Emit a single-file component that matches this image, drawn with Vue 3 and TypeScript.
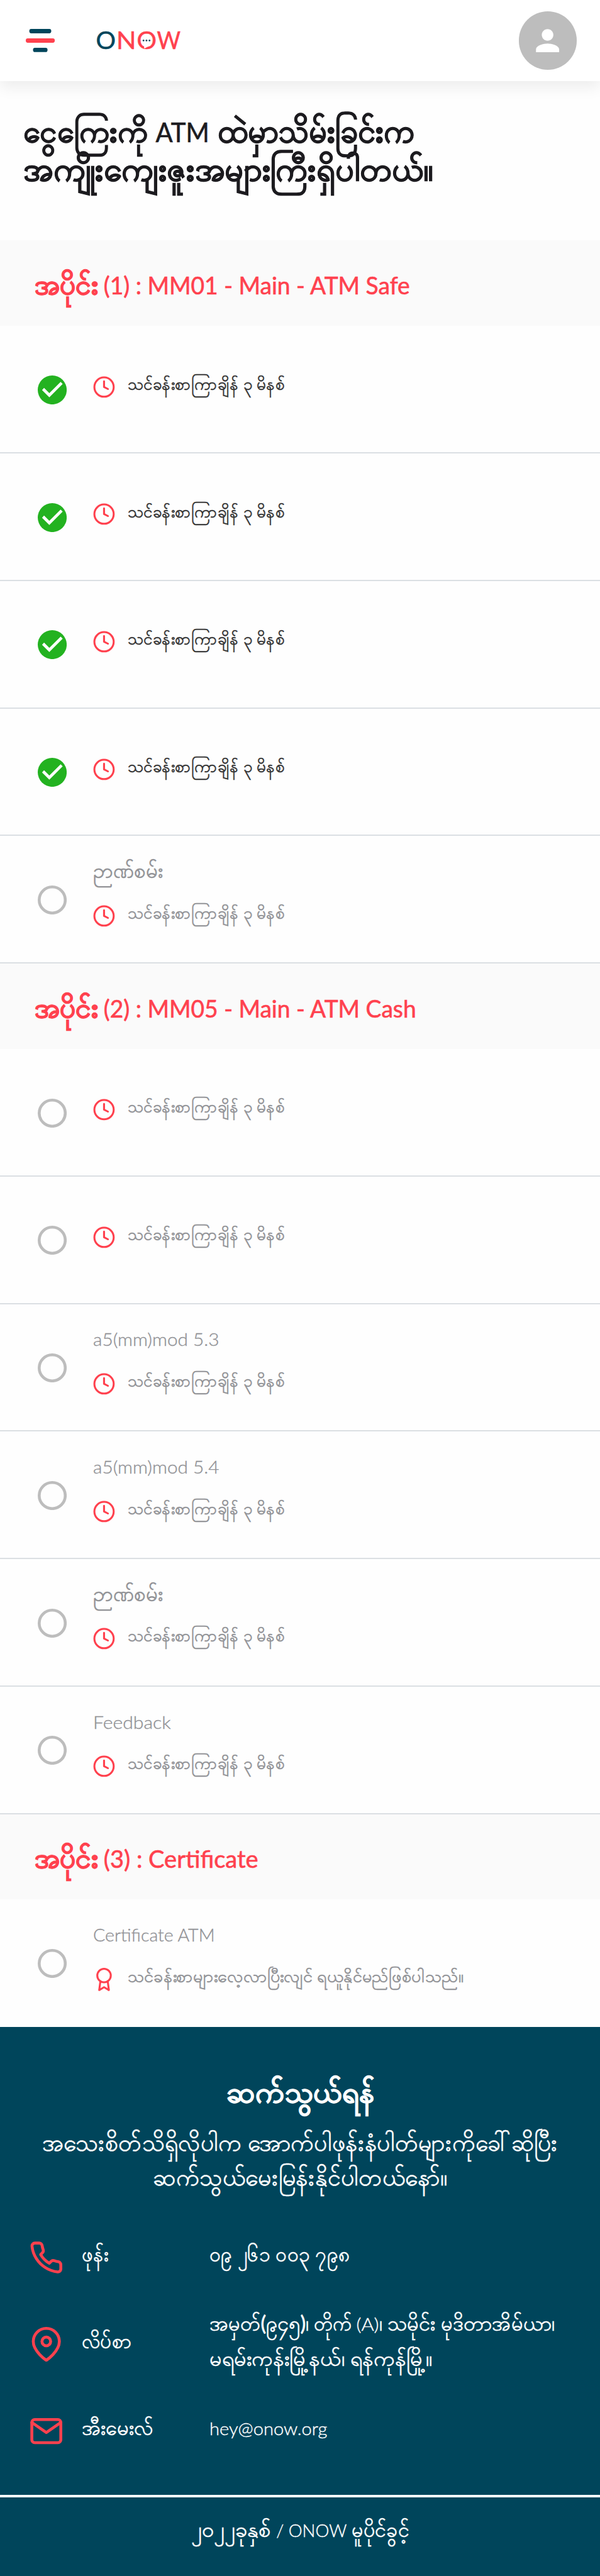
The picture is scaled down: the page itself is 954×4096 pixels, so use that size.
<script setup lang="ts">
import { h, type FunctionalComponent } from 'vue'

interface Run {
  text: string
  x?: number
  width: number
  size: number
  weight?: number
}

interface Lesson {
  title?: Run
  done?: boolean
  award?: boolean
}

interface Section {
  heading: Run[]
  lessons: Lesson[]
}

const outline = (run: Run): number => {
  const burmese = /[\u1000-\u109f]/.test(run.text)
  if (!burmese) return run.weight === 300 ? 0.5 : 0.8
  return run.weight === 700 ? 1.2 : 0.8
}

/** One line of mixed Burmese and Latin runs sharing a baseline. Units are tenths of a rem. */
const TextLine: FunctionalComponent<{ runs: Run[]; height: number; base: number }> = (props) => {
  const last = props.runs[props.runs.length - 1]
  const width = (last.x ?? 0) + last.width
  return h(
    'svg',
    { viewBox: `0 0 ${width} ${props.height}`, width: `${width / 10}rem`, height: `${props.height / 10}rem` },
    props.runs.map((run) =>
      h(
        'text',
        {
          x: run.x ?? 0,
          y: props.base,
          'font-size': run.size,
          'font-weight': run.weight ?? 400,
          stroke: 'currentColor',
          'stroke-width': outline(run),
          textLength: run.width,
          lengthAdjust: 'spacingAndGlyphs',
        },
        run.text,
      ),
    ),
  )
}
TextLine.props = ['runs', 'height', 'base']

const titleLines: Run[][] = [
  [
    { text: 'ငွေကြေးကို', x: 0, width: 258, size: 64, weight: 700 },
    { text: 'ATM', x: 274, width: 111, size: 55 },
    { text: 'ထဲမှာသိမ်းခြင်းက', x: 403, width: 407, size: 65, weight: 700 },
  ],
  [{ text: 'အကျိုးကျေးဇူးအများကြီးရှိပါတယ်။', width: 848, size: 65, weight: 700 }],
]

const part = (label: string, width: number): Run[] => [
  { text: 'အပိုင်း', x: 0, width: 131, size: 57, weight: 700 },
  { text: label, x: 143, width, size: 50 },
]

const quiz: Run = { text: 'ဉာဏ်စမ်း', width: 144, size: 43 }

const sections: Section[] = [
  {
    heading: part('(1) : MM01 - Main - ATM Safe', 634),
    lessons: [{ done: true }, { done: true }, { done: true }, { done: true }, { title: quiz }],
  },
  {
    heading: part('(2) : MM05 - Main - ATM Cash', 647),
    lessons: [
      {},
      {},
      { title: { text: 'a5(mm)mod 5.3', width: 261, size: 37, weight: 300 } },
      { title: { text: 'a5(mm)mod 5.4', width: 261, size: 37, weight: 300 } },
      { title: quiz },
      { title: { text: 'Feedback', width: 161, size: 37, weight: 300 } },
    ],
  },
  {
    heading: part('(3) : Certificate', 320),
    lessons: [{ title: { text: 'Certificate ATM', width: 252, size: 37, weight: 300 }, award: true }],
  },
]

const duration: Run[] = [{ text: 'သင်ခန်းစာကြာချိန် ၃ မိနစ်', width: 325, size: 35 }]
const certificateNote: Run[] = [
  { text: 'သင်ခန်းစာများလေ့လာပြီးလျင် ရယူနိုင်မည်ဖြစ်ပါသည်။', width: 696, size: 35.5 },
]

const contactHeading: Run[] = [{ text: 'ဆက်သွယ်ရန်', width: 306, size: 61, weight: 700 }]
const contactIntro: Run[][] = [
  [{ text: 'အသေးစိတ်သိရှိလိုပါက အောက်ပါဖုန်းနံပါတ်များကိုခေါ်ဆိုပြီး', width: 1068, size: 49.6 }],
  [{ text: 'ဆက်သွယ်မေးမြန်းနိုင်ပါတယ်နော်။', width: 609, size: 49.6 }],
]

const contacts: { icon: 'phone' | 'pin' | 'mail'; label: Run[]; value: Run[][] }[] = [
  {
    icon: 'phone',
    label: [{ text: 'ဖုန်း', width: 55, size: 42 }],
    value: [[{ text: '၀၉ ၂၆၁ ၀၀၃ ၇၉၈', width: 291, size: 42.5 }]],
  },
  {
    icon: 'pin',
    label: [{ text: 'လိပ်စာ', width: 103, size: 42 }],
    value: [
      [
        { text: 'အမှတ်(၉၄၅)၊', x: 0, width: 206, size: 42 },
        { text: 'တိုက်', x: 216, width: 79, size: 42 },
        { text: '(A)', x: 304, width: 47, size: 36, weight: 300 },
        { text: '၊ သမိုင်း မုဒိတာအိမ်ယာ၊', x: 351, width: 364, size: 42 },
      ],
      [{ text: 'မရမ်းကုန်းမြို့နယ်၊ ရန်ကုန်မြို့။', width: 461, size: 43 }],
    ],
  },
  {
    icon: 'mail',
    label: [{ text: 'အီးမေးလ်', width: 148, size: 42.5 }],
    value: [[{ text: 'hey@onow.org', width: 244, size: 37, weight: 300 }]],
  },
]

const copyright: Run[] = [
  { text: '၂၀၂၂ခုနှစ်', x: 0, width: 165, size: 43 },
  { text: '/ ONOW', x: 176, width: 146, size: 36, weight: 300 },
  { text: 'မူပိုင်ခွင့်', x: 332, width: 119, size: 42.5 },
]
</script>

<template>
  <div class="page">
    <header class="topbar">
      <svg class="menu" viewBox="0 0 60 48" role="img" aria-label="Menu">
        <rect class="navy" x="7.3" y="0" width="45.4" height="9" rx="4" />
        <rect class="red" x="0" y="19.5" width="60" height="9" rx="4" />
        <rect class="navy" x="15" y="39" width="30" height="9" rx="4" />
      </svg>
      <svg class="logo" viewBox="0 0 176 48">
        <text class="navy" x="-2" y="42" textLength="41" lengthAdjust="spacingAndGlyphs">O</text>
        <text class="red" x="40.5" y="42" textLength="41" lengthAdjust="spacingAndGlyphs">N</text>
        <text class="red" x="82.7" y="42" textLength="41" lengthAdjust="spacingAndGlyphs">O</text>
        <text class="red" x="124.5" y="42" textLength="49" lengthAdjust="spacingAndGlyphs">W</text>
        <path class="tail" d="M97.5 35.5 98.3 40.8 106 36.4z" />
        <circle class="navy" cx="96.6" cy="24" r="1.8" />
        <circle class="navy" cx="102.8" cy="24" r="1.8" />
        <circle class="navy" cx="109" cy="24" r="1.8" />
      </svg>
      <div class="avatar">
        <svg viewBox="0 0 24 24">
          <path
            d="M12 12c2.21 0 4-1.79 4-4s-1.79-4-4-4-4 1.79-4 4 1.79 4 4 4zm0 2c-2.67 0-8 1.34-8 4v2h16v-2c0-2.66-5.33-4-8-4z"
          />
        </svg>
      </div>
    </header>

    <h1 class="title">
      <TextLine v-for="(line, i) in titleLines" :key="i" class="line" :runs="line" :height="80" :base="60" />
    </h1>

    <section v-for="(section, s) in sections" :key="s">
      <h2 class="part">
        <TextLine class="line" :runs="section.heading" :height="100" :base="73.5" />
      </h2>
      <div
        v-for="(lesson, l) in section.lessons"
        :key="l"
        class="lesson"
        :class="{ done: lesson.done, untitled: !lesson.title }"
      >
        <svg v-if="lesson.done" class="state" viewBox="0 0 60 60">
          <circle class="green" cx="30" cy="30" r="30" />
          <path class="tick" d="M11 28 24 41 49.5 15.5" />
        </svg>
        <svg v-else class="state" viewBox="0 0 60 60">
          <circle class="ring" cx="30" cy="30" r="27" />
        </svg>
        <div class="body">
          <TextLine v-if="lesson.title" class="line" :runs="[lesson.title]" :height="88" :base="43" />
          <div class="meta">
            <svg v-if="lesson.award" class="glyph" viewBox="0 0 24 24">
              <circle cx="12" cy="8" r="7" />
              <path d="M8.21 13.89 7 23l5-3 5 3-1.21-9.12" />
            </svg>
            <svg v-else class="glyph" viewBox="0 0 24 24">
              <circle cx="12" cy="12" r="10" />
              <path d="M12 6v6l4 2" />
            </svg>
            <TextLine
              class="line"
              :runs="lesson.award ? certificateNote : duration"
              :height="66"
              :base="39"
            />
          </div>
        </div>
      </div>
    </section>

    <footer class="footer">
      <div class="intro">
        <TextLine class="line heading" :runs="contactHeading" :height="100" :base="70" />
        <TextLine v-for="(line, i) in contactIntro" :key="i" class="line" :runs="line" :height="72" :base="50" />
      </div>
      <div v-for="contact in contacts" :key="contact.icon" class="contact">
        <svg class="contact-icon" viewBox="0 0 24 24">
          <path
            v-if="contact.icon === 'phone'"
            d="M22 16.92v3a2 2 0 0 1-2.18 2 19.79 19.79 0 0 1-8.63-3.07 19.5 19.5 0 0 1-6-6 19.79 19.79 0 0 1-3.07-8.67A2 2 0 0 1 4.11 2h3a2 2 0 0 1 2 1.72 12.84 12.84 0 0 0 .7 2.81 2 2 0 0 1-.45 2.11L8.09 9.91a16 16 0 0 0 6 6l1.27-1.27a2 2 0 0 1 2.11-.45 12.84 12.84 0 0 0 2.81.7A2 2 0 0 1 22 16.92z"
          />
          <template v-else-if="contact.icon === 'pin'">
            <path d="M21 10c0 7-9 13-9 13s-9-6-9-13a9 9 0 0 1 18 0z" />
            <circle cx="12" cy="10" r="3" />
          </template>
          <template v-else>
            <path d="M4 4h16c1.1 0 2 .9 2 2v12c0 1.1-.9 2-2 2H4c-1.1 0-2-.9-2-2V6c0-1.1.9-2 2-2z" />
            <path d="M22 6 12 13 2 6" />
          </template>
        </svg>
        <div class="contact-label">
          <TextLine class="line" :runs="contact.label" :height="72" :base="44" />
        </div>
        <div class="contact-value">
          <TextLine v-for="(line, i) in contact.value" :key="i" class="line" :runs="line" :height="72" :base="44" />
        </div>
      </div>
      <div class="copyright">
        <TextLine class="line" :runs="copyright" :height="80" :base="50" />
      </div>
    </footer>
  </div>
</template>

<style>
html {
  font-size: 7.68px;
}
body {
  margin: 0;
  background: #fefefe;
}
</style>

<style scoped>
.page {
  width: 100%;
  height: 4096px;
  overflow: hidden;
  font-family: Lato, "Noto Sans", sans-serif;
  color: #1c1b1f;
  background: #fefefe;
}
svg {
  display: block;
  flex: none;
}
.line {
  overflow: visible;
  fill: currentColor;
}
.navy {
  fill: #00455b;
}
.red {
  fill: #ff414e;
}

.topbar {
  height: 16.8rem;
  box-sizing: border-box;
  padding: 0 4.8rem 0 5.4rem;
  display: flex;
  align-items: center;
  background: #fff;
  box-shadow: 0 1.2rem 3rem rgba(0, 0, 0, 0.075);
}
.menu {
  width: 6rem;
  height: 4.8rem;
}
.logo {
  width: 17.6rem;
  height: 4.8rem;
  margin-left: 8.7rem;
  overflow: visible;
  font-size: 50px;
}
.logo text {
  stroke-width: 0.7;
}
.logo text.navy {
  stroke: #00455b;
}
.logo text.red {
  stroke: #ff414e;
}
.tail {
  fill: #fff;
}
.avatar {
  width: 12rem;
  height: 12rem;
  margin-left: auto;
  border-radius: 50%;
  background: #bdbdbd;
  display: flex;
  align-items: center;
  justify-content: center;
}
.avatar svg {
  width: 7.2rem;
  height: 7.2rem;
  fill: #fff;
}

.title {
  height: 33rem;
  box-sizing: border-box;
  margin: 0;
  padding: 6.6rem 0 0 4.8rem;
}
.part {
  height: 17.7rem;
  margin: 0;
  padding-left: 7.2rem;
  display: flex;
  align-items: center;
  background: #fafafa;
  color: #ff414e;
}

.lesson {
  height: 26.4rem;
  box-sizing: border-box;
  border-bottom: 0.3rem solid #dbdfe3;
  padding-left: 7.8rem;
  display: flex;
  gap: 5.5rem;
  align-items: center;
  color: #919296;
}
section:last-of-type .lesson:last-child {
  border-bottom-color: transparent;
}
.lesson.done {
  color: #333;
}
.state {
  width: 6rem;
  height: 6rem;
  margin-top: 0.3rem;
}
.green {
  fill: #23b220;
}
.tick {
  fill: none;
  stroke: #fff;
  stroke-width: 6;
}
.ring {
  fill: none;
  stroke: #bdbdbd;
  stroke-width: 6;
}
.body {
  height: 100%;
  box-sizing: border-box;
  padding-top: 4.4rem;
}
.untitled .body {
  padding-top: 9.3rem;
}
.meta {
  height: 6.6rem;
  margin-left: -0.1rem;
  display: flex;
  align-items: center;
  gap: 2.4rem;
}
.glyph {
  width: 4.8rem;
  height: 4.8rem;
}
.glyph,
.contact-icon {
  fill: none;
  stroke: #ff414e;
  stroke-width: 2;
  stroke-linecap: round;
  stroke-linejoin: round;
}

.footer {
  height: 113.7rem;
  background: #00455b;
  color: #fff;
}
.intro {
  height: 38.7rem;
  box-sizing: border-box;
  padding-top: 8.6rem;
  display: flex;
  flex-direction: column;
  align-items: center;
}
.heading {
  margin-bottom: 2.05rem;
}
.contact {
  height: 18rem;
  padding-left: 6rem;
  display: flex;
  align-items: center;
}
.contact-icon {
  width: 7.2rem;
  height: 7.2rem;
  margin-right: 3.7rem;
}
.contact-label {
  width: 26.5rem;
}
.copyright {
  margin-top: 4.2rem;
  padding-top: 3.25rem;
  border-top: 0.6rem solid #fff;
  display: flex;
  justify-content: center;
}
</style>
